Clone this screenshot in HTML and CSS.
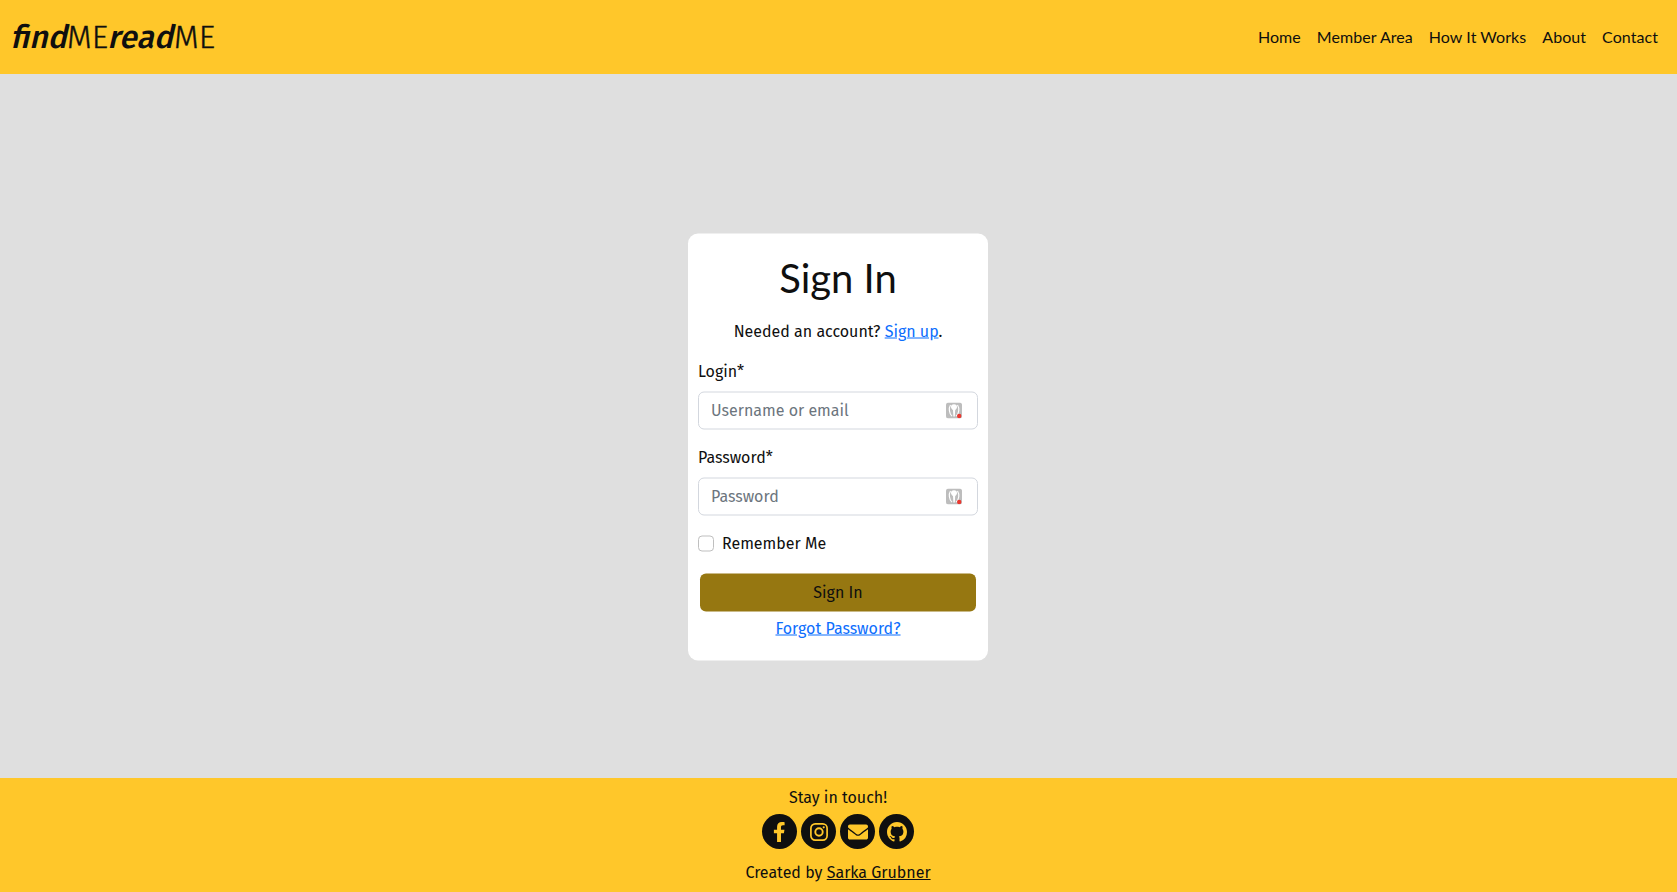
FILE: index.html
```html
<!DOCTYPE html>
<html lang="en">
<head>
<meta charset="utf-8">
<title>findMEreadME - Sign In</title>
<link rel="stylesheet" href="styles.css">
</head>
<body>
<header class="header">
  <a class="logo" href="#"><span class="logo-find">find</span><span class="logo-me">ME</span><span class="logo-read">read</span><span class="logo-me">ME</span></a>
  <nav class="nav"><a href="#">Home</a><a href="#">Member Area</a><a href="#">How It Works</a><a href="#">About</a><a href="#">Contact</a></nav>
</header>
<main class="main">
  <form class="card">
    <h1 class="title">Sign In</h1>
    <p class="intro">Needed an account? <a class="link" href="#">Sign up</a>.</p>
    <label class="label" for="login">Login*</label>
    <div class="field">
      <input class="input" id="login" type="text" placeholder="Username or email">
      <svg class="key" viewBox="0 0 16 16"><rect width="16" height="16" rx="2.500" fill="#bdbdbd"/><path d="M4.500 2.500C2.600 5.500 3 11 6 13.600M11.500 2.500c2 3 1.800 8.500-1.500 11.100" fill="none" stroke="#fff" stroke-width="1.200"/><path d="M8 1.800c1.900 0 3.200 1.200 3 2.900-.1 1.200-.9 2.200-1.800 2.800L8.800 14H7.400L7 7.500C6 6.900 5.100 5.900 5 4.700 4.800 3 6.100 1.800 8 1.800z" fill="#fff"/><circle cx="13.200" cy="13.500" r="2.200" fill="#ea3830"/></svg>
    </div>
    <label class="label" for="password">Password*</label>
    <div class="field">
      <input class="input" id="password" type="password" placeholder="Password">
      <svg class="key" viewBox="0 0 16 16"><rect width="16" height="16" rx="2.500" fill="#bdbdbd"/><path d="M4.500 2.500C2.600 5.500 3 11 6 13.600M11.500 2.500c2 3 1.800 8.500-1.500 11.100" fill="none" stroke="#fff" stroke-width="1.200"/><path d="M8 1.800c1.900 0 3.200 1.200 3 2.900-.1 1.200-.9 2.200-1.800 2.800L8.800 14H7.400L7 7.500C6 6.900 5.100 5.900 5 4.700 4.800 3 6.100 1.800 8 1.800z" fill="#fff"/><circle cx="13.200" cy="13.500" r="2.200" fill="#ea3830"/></svg>
    </div>
    <label class="remember"><input class="check" type="checkbox"><span>Remember Me</span></label>
    <button class="button" type="button">Sign In</button>
    <a class="link forgot" href="#">Forgot Password?</a>
  </form>
</main>
<footer class="footer">
  <p class="touch">Stay in touch!</p>
  <div class="socials">
    <a class="social" href="#" aria-label="Facebook"><svg width="12.500" height="20" viewBox="0 0 320 512"><path d="M279.140 288l14.220-92.660h-88.910v-60.130c0-25.350 12.420-50.060 52.240-50.060h40.420V6.260S260.430 0 225.360 0c-73.220 0-121.080 44.380-121.080 124.720v70.620H22.890V288h81.390v224h100.170V288z"/></svg></a>
    <a class="social" href="#" aria-label="Instagram"><svg width="18" height="18" viewBox="0 0 18 18"><rect x=".9" y=".9" width="16.200" height="16.200" rx="4.300" fill="none" stroke="#ffc72a" stroke-width="1.700"/><circle cx="9" cy="9" r="3.700" fill="none" stroke="#ffc72a" stroke-width="1.900"/><circle cx="13.700" cy="4.300" r="1.100"/></svg></a>
    <a class="social" href="#" aria-label="Email"><svg width="20" height="20" viewBox="0 0 512 512"><path d="M502.300 190.800c3.900-3.100 9.700-.2 9.700 4.700V400c0 26.500-21.500 48-48 48H48c-26.500 0-48-21.500-48-48V195.600c0-5 5.700-7.800 9.700-4.700 22.400 17.400 52.100 39.500 154.100 113.600 21.100 15.400 56.700 47.800 92.200 47.600 35.700.3 72-32.800 92.300-47.600 102-74.100 131.600-96.300 154-113.700zM256 320c23.200.4 56.600-29.200 73.400-41.400 132.700-96.300 142.800-104.700 173.400-128.700 5.800-4.500 9.200-11.500 9.200-18.900v-19c0-26.500-21.500-48-48-48H48c-26.500 0-48 21.500-48 48v19c0 7.400 3.400 14.300 9.200 18.900 30.600 23.900 40.700 32.400 173.400 128.700 16.800 12.200 50.200 41.800 73.400 41.400z"/></svg></a>
    <a class="social" href="#" aria-label="GitHub"><svg width="20" height="20" viewBox="0 0 16 16"><path d="M8 0C3.580 0 0 3.580 0 8c0 3.540 2.290 6.530 5.470 7.590.4.070.55-.17.55-.38 0-.19-.01-.82-.01-1.490-2.010.37-2.530-.49-2.690-.94-.09-.23-.48-.94-.82-1.130-.28-.15-.68-.52-.01-.53.63-.01 1.080.58 1.230.82.720 1.210 1.870.87 2.330.66.070-.52.280-.87.510-1.070-1.780-.2-3.640-.89-3.640-3.950 0-.87.310-1.590.820-2.150-.08-.2-.36-1.020.08-2.120 0 0 .67-.21 2.200.820.640-.18 1.320-.27 2-.27s1.360.09 2 .27c1.530-1.040 2.200-.82 2.200-.82.440 1.100.160 1.920.080 2.120.510.560.820 1.270.820 2.150 0 3.070-1.870 3.750-3.650 3.950.290.250.540.730.540 1.480 0 1.070-.01 1.930-.01 2.200 0 .21.150.46.550.38A8.010 8.010 0 0 0 16 8c0-4.420-3.580-8-8-8z"/></svg></a>
  </div>
  <p class="credit">Created by <a href="#">Sarka Grubner</a></p>
</footer>
</body>
</html>
```
FILE: styles.css
```css
* { box-sizing: border-box; }
body {
  margin: 0;
  height: 892px;
  display: flex;
  flex-direction: column;
  background: #dfdfdf;
  color: #0f0f0f;
  font: 400 16px/24px "Fira Sans", "Noto Sans", sans-serif;
}
p { margin: 0; }
.header {
  height: 74px;
  padding: 0 19px 0 12px;
  background: #ffc72a;
  display: flex;
  align-items: center;
  justify-content: space-between;
}
.logo {
  display: flex;
  color: #0f0f0f;
  text-decoration: none;
  font-size: 32px;
  line-height: 48px;
}
.logo-find, .logo-read { font-weight: 500; transform: translateX(.7px) skewX(-13deg); }
.logo-find { width: 55px; }
.logo-read { width: 65px; letter-spacing: .1px; }
.logo-me { width: 42px; font-weight: 300; -webkit-text-stroke: .4px #0f0f0f; }
.nav { display: flex; gap: 16px; font-family: Lato, sans-serif; letter-spacing: .06px; }
.nav a { color: #0f0f0f; text-decoration: none; }
.main { flex: 1; padding: 160px 1px 0 0; }
.card {
  width: 300px;
  height: 427px;
  margin: 0 auto;
  padding: 20px 10px;
  border-radius: 10px;
  background: #fff;
  display: flex;
  flex-direction: column;
  transform: translateY(-.5px);
}
.title {
  margin: 0 0 18px;
  font: 400 40px/48px Lato, sans-serif;
  text-align: center;
}
.intro { margin-bottom: 16px; text-align: center; white-space: nowrap; }
.link { color: #0d6efd; }
.label { margin-bottom: 8px; }
.field { position: relative; margin-bottom: 16px; }
.input {
  display: block;
  width: 100%;
  height: 38px;
  padding: 5px 12px 7px;
  border: 1px solid #d3d7de;
  border-radius: 6px;
  font: inherit;
}
.input::placeholder { color: #6c757d; opacity: 1; }
.key { position: absolute; right: 16px; top: 11px; width: 16px; height: 16px; }
.remember { display: flex; align-items: center; gap: 8px; }
.check {
  appearance: none;
  width: 16px;
  height: 16px;
  margin: 0;
  border: 1px solid #bfbfbf;
  border-radius: 4px;
}
.button {
  height: 38px;
  margin: 18px 2px 5px;
  padding: 0;
  border: 0;
  border-radius: 6px;
  background: #967711;
  color: #0f0f0f;
  font: inherit;
}
.forgot { align-self: center; }
.footer {
  height: 114px;
  padding: 8px 1px 0 0;
  background: #ffc72a;
  display: flex;
  flex-direction: column;
  align-items: center;
}
.socials { display: flex; gap: 4px; margin: 4px 0 12px; }
.social {
  width: 35px;
  height: 35px;
  border-radius: 50%;
  background: #0f0f0f;
  display: flex;
  align-items: center;
  justify-content: center;
}
.social svg { fill: #ffc72a; }
.credit a { color: inherit; }
```
